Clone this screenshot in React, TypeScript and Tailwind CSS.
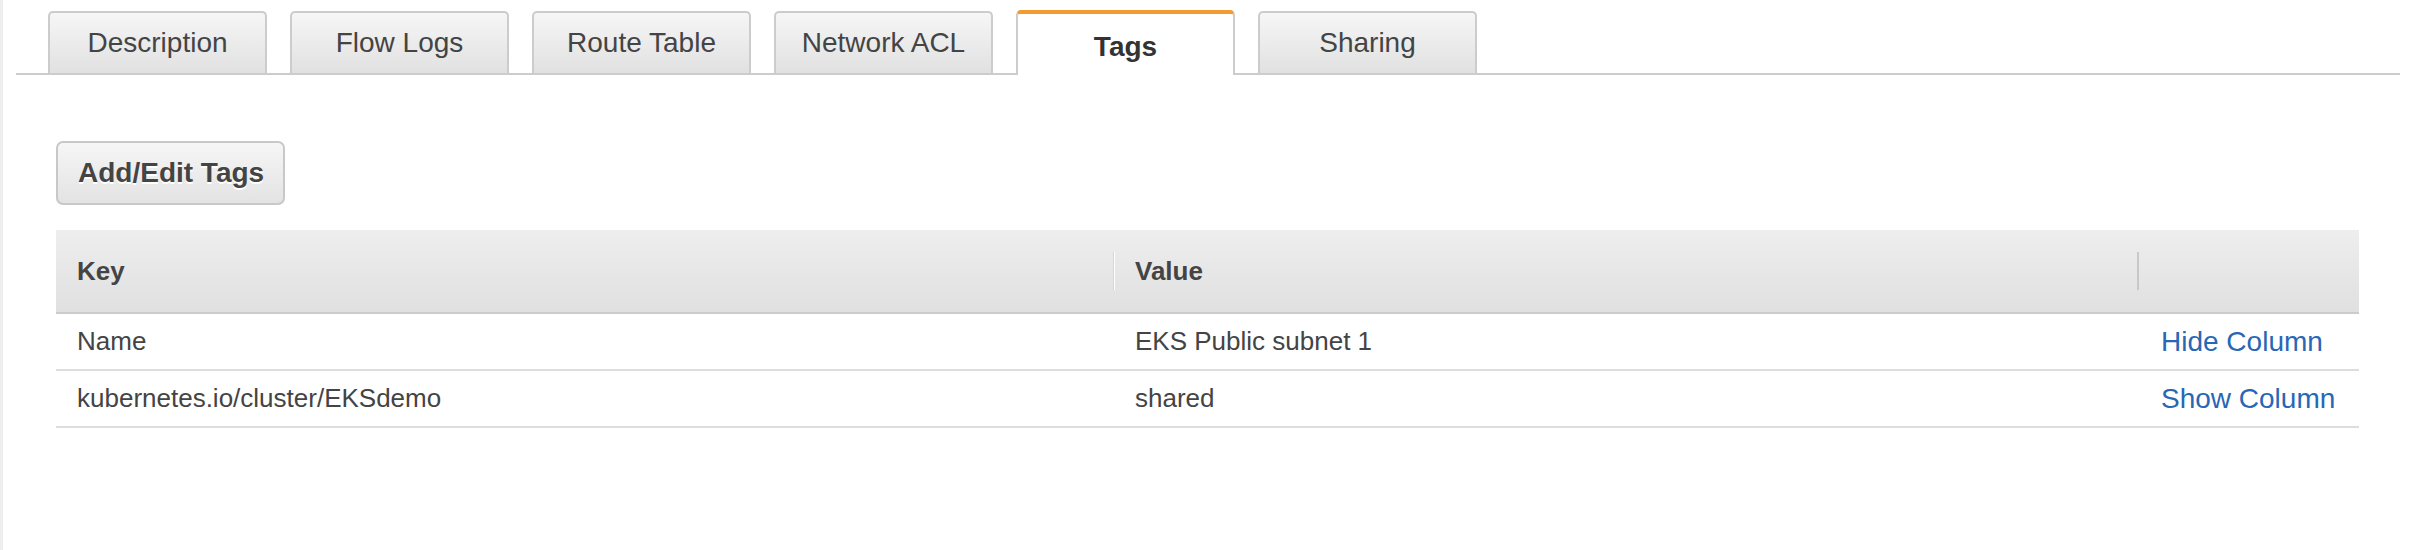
import React from "react";

const tabs = ["Description", "Flow Logs", "Route Table", "Network ACL", "Tags", "Sharing"];

const rows = [
  { key: "Name", value: "EKS Public subnet 1", action: "Hide Column" },
  { key: "kubernetes.io/cluster/EKSdemo", value: "shared", action: "Show Column" },
];

export default function App() {
  const active = "Tags";

  return (
    <div
      className="w-[2410px] h-[550px] bg-white border-l-[3px] border-[#eeeeee] text-[#444] overflow-hidden"
      style={{ fontFamily: '"Liberation Sans", Arial, Helvetica, sans-serif' }}
    >
      {/* tab strip */}
      <div className="ml-[13px] mr-[10px] mt-[10px] flex items-end gap-[23px] pl-[32px] border-b-2 border-[#cccccc]">
        {tabs.map((t) =>
          t === active ? (
            <div
              key={t}
              className="relative w-[219px] h-[65px] -mb-[2px] bg-white border-x-2 border-[#cccccc] border-t-4 border-t-[#f29b31] rounded-t-[5px] flex items-center justify-center pt-[5px] text-[28px] font-bold text-[#333]"
            >
              {t}
            </div>
          ) : (
            <div
              key={t}
              className="w-[219px] h-[62px] bg-gradient-to-b from-[#f6f6f6] to-[#e1e1e1] border-x-2 border-t-2 border-[#cccccc] rounded-t-[5px] flex items-center justify-center text-[28px] text-[#444]"
            >
              {t}
            </div>
          )
        )}
      </div>

      <div className="ml-[53px] mr-[51px]">
        <button
          className="mt-[66px] w-[229px] h-[64px] rounded-[7px] border-2 border-[#c8c8c8] bg-gradient-to-b from-[#f6f6f6] to-[#e3e3e3] text-[28px] font-bold text-[#444] flex items-center pl-[20px]"
          style={{ textShadow: "0 2px 0 #fff" }}
        >
          Add/Edit Tags
        </button>

        {/* tags table */}
        <div className="mt-[25px] text-[26px]">
          <div className="grid grid-cols-[1057px_1024px_1fr] h-[84px] bg-gradient-to-b from-[#eeeeee] to-[#e0e0e0] border-b-2 border-[#cccccc] font-bold text-[#444]">
            <div className="flex items-center pl-[21px]">Key</div>
            <div className="flex items-center">
              <span className="w-[2px] h-[38px] bg-[#d6d6d6] border-r border-white" />
              <span className="ml-[20px]">Value</span>
            </div>
            <div className="flex items-center">
              <span className="w-[2px] h-[38px] bg-[#c8c8c8]" />
            </div>
          </div>
          {rows.map((r) => (
            <div key={r.key} className="grid grid-cols-[1057px_1024px_1fr] h-[57px] border-b-2 border-[#dddddd]">
              <div className="flex items-center pl-[21px]">{r.key}</div>
              <div className="flex items-center pl-[22px]">{r.value}</div>
              <div className="flex items-center pl-[24px]">
                <a className="text-[28px] text-[#2767b5] cursor-pointer">{r.action}</a>
              </div>
            </div>
          ))}
        </div>
      </div>
    </div>
  );
}
